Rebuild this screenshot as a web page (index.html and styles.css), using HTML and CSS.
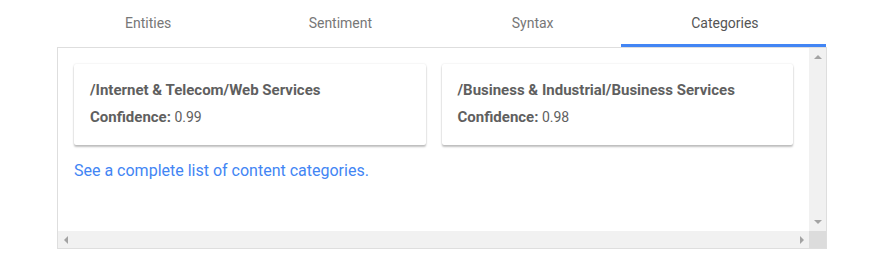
FILE: index.html
```html
<!DOCTYPE html>
<html lang="en">
  <head>
    <meta charset="UTF-8" />
    <meta name="viewport" content="width=device-width, initial-scale=1.0" />
    <title>Categories</title>
    <link rel="stylesheet" href="styles.css">
  </head>

  <body>
    <div class="widget">
      <div class="tabs">
        <div class="tab">Entities</div>
        <div class="tab">Sentiment</div>
        <div class="tab">Syntax</div>
        <div class="tab active">Categories</div>
      </div>
      <div class="panel">
        <div class="view">
          <div class="cards">
            <div class="card">
              <div class="card-title">/Internet &amp; Telecom/Web Services</div>
              <div class="card-line"><b>Confidence:</b> 0.99</div>
            </div>
            <div class="card">
              <div class="card-title">/Business &amp; Industrial/Business Services</div>
              <div class="card-line"><b>Confidence:</b> 0.98</div>
            </div>
          </div>
          <a class="more" href="#">See a complete list of content categories.</a>
        </div>
        <div class="vbar">
          <span class="arrow up"></span>
          <span class="arrow down"></span>
        </div>
        <div class="hbar">
          <span class="arrow left"></span>
          <span class="arrow right"></span>
        </div>
        <div class="corner"></div>
      </div>
    </div>
  </body>
</html>
```

FILE: styles.css
```css
body {
  margin: 0;
  font-family: Roboto, "Noto Sans", Arial, sans-serif;
  background: #fff;
}

.widget {
  width: 770px;
  margin-left: 57px;
}

.tabs {
  display: flex;
  width: 769px;
  margin-left: -5px;
  height: 47px;
}

.tab {
  flex: 1;
  text-align: center;
  line-height: 47px;
  font-size: 14px;
  color: #777;
  position: relative;
}

.tab.active {
  color: #555;
}

.tab.active::after {
  content: "";
  position: absolute;
  left: -8px;
  right: -5px;
  bottom: 0;
  height: 3px;
  background: #4285f4;
}

.panel {
  display: grid;
  grid-template-columns: 1fr 17px;
  grid-template-rows: 183px 17px;
  border: 1px solid #dedede;
}

.view {
  padding: 16px;
  overflow: hidden;
}

.cards {
  display: grid;
  grid-template-columns: 1fr 1fr;
  gap: 16px;
}

.card {
  background: #fff;
  padding: 16px 16px 18px;
  box-shadow: 0 2px 2px rgba(0, 0, 0, 0.24), 0 0 2px rgba(0, 0, 0, 0.12);
  border-radius: 2px;
  color: #5f5f5f;
}

.card-title {
  font-size: 15px;
  font-weight: 700;
  line-height: 20px;
  margin-bottom: 7px;
}

.card-line {
  font-size: 14px;
  line-height: 20px;
}

.card-line b {
  font-size: 15px;
}

.more {
  display: inline-block;
  margin-top: 14px;
  font-size: 16px;
  line-height: 24px;
  color: #4285f4;
  text-decoration: none;
}

.vbar {
  background: #f1f1f1;
  display: flex;
  flex-direction: column;
  justify-content: space-between;
  align-items: center;
  padding: 7px 0;
}

.hbar {
  background: #f1f1f1;
  display: flex;
  justify-content: space-between;
  align-items: center;
  padding: 0 5px 0 6px;
}

.corner {
  background: #dcdcdc;
}

.arrow {
  width: 0;
  height: 0;
  border: 4px solid transparent;
}

.arrow.up {
  border-top-width: 0;
  border-bottom-color: #a3a3a3;
}

.arrow.down {
  border-bottom-width: 0;
  border-top-color: #a3a3a3;
}

.arrow.left {
  border-left-width: 0;
  border-right-color: #a3a3a3;
}

.arrow.right {
  border-right-width: 0;
  border-left-color: #a3a3a3;
}
```
